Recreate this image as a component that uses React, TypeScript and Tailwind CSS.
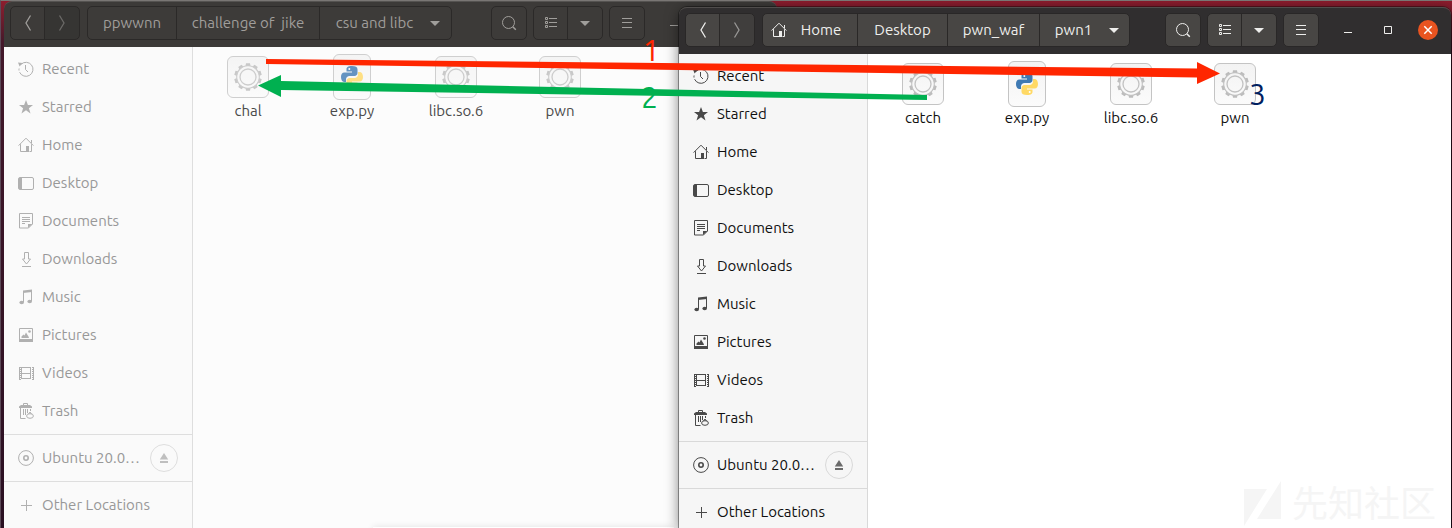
import React from "react";

type IconName =
  | "recent" | "starred" | "home" | "desktop" | "documents" | "downloads"
  | "music" | "pictures" | "videos" | "trash" | "disc" | "plus" | "eject"
  | "back" | "forward" | "search" | "list" | "down" | "menu"
  | "minimize" | "maximize" | "close";

const line = { fill: "none", stroke: "currentColor", strokeWidth: 1 } as const;

const shapes: Record<IconName, React.ReactNode> = {
  recent: (
    <>
      <path {...line} d="M3.2 3.2a7 7 0 1 1-1.6 8M1 9.5a7 7 0 0 1 .1-2" />
      <path d="M0 1.5 4.6 2 1.6 5.6z" />
      <path {...line} d="M7.5 4v4.5l2.5 2.5" />
    </>
  ),
  starred: <path d="m8 1 1.9 5h5.1l-4.100 3.200 1.600 5.300L8 11.300l-4.500 3.200 1.600-5.300L1 6h5.100z" />,
  home: (
    <>
      <path {...line} d="M.6 8.600 8 1.200l7.400 7.400M2.500 7.200v7.300h6V10M13.500 7.200v7.300h-2M13.500 3v3" />
      <path d="M8 9h3v6H8z" />
    </>
  ),
  desktop: (
    <>
      <rect {...line} x=".5" y="2.500" width="15" height="12" rx="1.500" />
      <path d="M1 3h3v11H1z" />
    </>
  ),
  documents: (
    <>
      <path {...line} d="M1.500.500h13v10.500l-4 4h-9z" />
      <path {...line} d="M4 4.500h8M4 6.500h8M4 8.500h8M4 10.500h3" />
      <path d="M10 15v-4h4.500z" />
    </>
  ),
  downloads: <path {...line} d="M6.500 1.500h4v6.500h2l-4 5-4-5h2zM4 15.500h9" />,
  music: (
    <>
      <path d="M5 1.500 14 .500v2.500L5 4z" />
      <path {...line} d="M5.500 2v11M13.500 1v11" />
      <ellipse cx="3.700" cy="13.500" rx="2.300" ry="1.800" />
      <ellipse cx="11.700" cy="12.500" rx="2.300" ry="1.800" />
    </>
  ),
  pictures: (
    <>
      <path {...line} d="M1.500 1.500h13v13h-13z" />
      <path d="M1 12h14v3H1zM3.500 11V9.500l2-2 1 1 1.500-3 1.500 2.500 1 1.500.500 1.500z" />
      <circle cx="11.500" cy="4.500" r="1.300" />
    </>
  ),
  videos: (
    <>
      <path {...line} d="M3.500 2v12M12.500 2v12M3 2.500h10M3 8.500h10M3 13.500h10" />
      <path {...line} strokeWidth={2} strokeDasharray="1 1" d="M2 2v13M15 2v13" />
      <path {...line} d="M1.500 2v13M15.500 2v13" />
    </>
  ),
  trash: (
    <>
      <path d="M1 5V3.500L3 2h9l2 1.500V5z" />
      <path {...line} d="M5.500 2V.500h4V2M2.500 5v10.500h5M5.500 6v6M7.500 6v6M9.500 6v4M12.500 6v2" />
      <ellipse {...line} cx="12" cy="13" rx="3.400" ry="2.300" />
      <path {...line} d="m10.500 11 1.500-2 1.500 2" />
    </>
  ),
  disc: (
    <>
      <circle {...line} cx="8" cy="8" r="7.400" />
      <circle {...line} strokeWidth={1.600} cx="8" cy="8" r="2.200" />
    </>
  ),
  plus: <path {...line} d="M8.500 3v11M3 8.500h11" />,
  eject: <path d="M8 3l4.200 6.500H3.800zM4 11h8v2H4z" />,
  back: <path {...line} strokeWidth={1.300} d="M10.500.500 6 8l4.500 7.500" />,
  forward: <path {...line} strokeWidth={1.300} d="M5.500.500 10 8l-4.500 7.500" />,
  search: (
    <>
      <circle {...line} cx="7.500" cy="7.500" r="6" />
      <path {...line} strokeWidth={1.500} d="m11.800 11.800 3 3" />
    </>
  ),
  list: (
    <>
      <path {...line} d="M2.500 2.500h2v2h-2zM2.500 6.500h2v2h-2zM2.500 10.500h2v2h-2z" />
      <path {...line} d="M6 3.500h8M6 7.500h8M6 11.500h8" />
    </>
  ),
  down: <path d="M3 6h10l-5 5z" />,
  menu: <path {...line} d="M3 3.500h10M3 7.500h10M3 12.500h10" />,
  minimize: <path {...line} d="M4 10.500h8" />,
  maximize: <path {...line} d="M4.500 4.500h7v7h-7z" />,
  close: <path {...line} strokeWidth={1.500} d="m4.300 4.300 7.400 7.400M11.700 4.300l-7.400 7.400" />,
};

function Icon({ name, className = "" }: { name: IconName; className?: string }) {
  return (
    <svg viewBox="0 0 16 16" fill="currentColor" aria-hidden="true" className={`size-4 shrink-0 ${className}`}>
      {shapes[name]}
    </svg>
  );
}

type Crumb = { label: string; width: string; icon?: IconName; menu?: boolean };
type FileItem = { name: string; kind: "binary" | "python" };

const places: { label: string; icon: IconName }[] = [
  { label: "Recent", icon: "recent" },
  { label: "Starred", icon: "starred" },
  { label: "Home", icon: "home" },
  { label: "Desktop", icon: "desktop" },
  { label: "Documents", icon: "documents" },
  { label: "Downloads", icon: "downloads" },
  { label: "Music", icon: "music" },
  { label: "Pictures", icon: "pictures" },
  { label: "Videos", icon: "videos" },
  { label: "Trash", icon: "trash" },
];

function ButtonGroup({ active, children }: { active: boolean; children: React.ReactNode }) {
  return (
    <div
      className={`flex h-[34px] shrink-0 divide-x overflow-hidden rounded-[5px] border ${
        active
          ? "divide-[#2a2827] border-[#292727] bg-[#484644] text-[#eeeeec]"
          : "divide-[#2b2928] border-[#2b2928] bg-[#3d3b39] text-[#a09e9b]"
      }`}
    >
      {children}
    </div>
  );
}

function ToolButton({ icon, label, dim = false }: { icon: IconName; label: string; dim?: boolean }) {
  return (
    <button type="button" aria-label={label} className={`flex w-[34px] items-center justify-center ${dim ? "bg-black/10" : ""}`}>
      <Icon name={icon} className={dim ? "opacity-50" : ""} />
    </button>
  );
}

function TitleBar({ active, crumbs }: { active: boolean; crumbs: Crumb[] }) {
  return (
    <header
      className={`flex shrink-0 items-center gap-[7px] rounded-t-lg border-t pr-[13px] pb-[3px] pl-1.5 ${
        active ? "h-[47px] border-[#504d4c] bg-[#302e2f] text-[#eeeeec]" : "h-[46px] border-[#555351] bg-[#3c3a38] text-[#a09e9b]"
      }`}
    >
      <ButtonGroup active={active}>
        <ToolButton icon="back" label="Back" />
        <ToolButton icon="forward" label="Forward" dim />
      </ButtonGroup>
      <ButtonGroup active={active}>
        {crumbs.map((c) => (
          <button
            key={c.label}
            type="button"
            className={`flex items-center justify-center whitespace-pre ${c.width} ${c.icon ? "pr-2" : ""} ${c.menu ? "pl-2" : ""}`}
          >
            {c.icon && <Icon name={c.icon} className="mr-3.5" />}
            {c.label}
            {c.menu && <Icon name="down" className="ml-3.5" />}
          </button>
        ))}
      </ButtonGroup>
      <div className="ml-auto flex items-center gap-1.5">
        <ButtonGroup active={active}>
          <ToolButton icon="search" label="Search" />
        </ButtonGroup>
        <ButtonGroup active={active}>
          <ToolButton icon="list" label="List view" />
          <ToolButton icon="down" label="View options" />
        </ButtonGroup>
        <ButtonGroup active={active}>
          <ToolButton icon="menu" label="Menu" />
        </ButtonGroup>
      </div>
      <div className="ml-3 flex items-center gap-5">
        <button type="button" aria-label="Minimize" className="flex size-5 items-center justify-center">
          <Icon name="minimize" />
        </button>
        <button type="button" aria-label="Maximize" className="flex size-5 items-center justify-center">
          <Icon name="maximize" />
        </button>
        <button type="button" aria-label="Close" className="flex size-5 items-center justify-center rounded-full bg-[#e95420] text-white">
          <Icon name="close" />
        </button>
      </div>
    </header>
  );
}

function Place({ icon, label }: { icon: IconName; label: string }) {
  return (
    <a href="#" className="flex h-[38px] items-center gap-2 pl-3.5">
      <Icon name={icon} className="opacity-75" />
      {label}
    </a>
  );
}

function Sidebar({ active }: { active: boolean }) {
  const rule = active ? "border-[#d9d9d9]" : "border-[#dedede]";
  return (
    <nav
      aria-label="Places"
      className={`w-[189px] shrink-0 border-r pt-[3px] ${rule} ${active ? "bg-[#f6f6f6] text-[#101010]" : "bg-[#fafafa] text-[#989898]"}`}
    >
      {places.map((p) => (
        <Place key={p.label} {...p} />
      ))}
      <div className={`mt-1 flex h-12 items-center justify-between border-y pr-3.5 ${rule}`}>
        <Place icon="disc" label="Ubuntu 20.0…" />
        <button type="button" aria-label="Eject" className={`flex size-7 shrink-0 items-center justify-center rounded-full border ${rule}`}>
          <Icon name="eject" className="opacity-60" />
        </button>
      </div>
      <div className="pt-1">
        <Place icon="plus" label="Other Locations" />
      </div>
    </nav>
  );
}

const teeth = [0, 36, 72, 108, 144, 180, 216, 252, 288, 324];

function Gear() {
  return (
    <svg viewBox="0 0 32 32" className="size-8" aria-hidden="true" fill="none" stroke="#c2c2c2">
      {teeth.map((a) => (
        <path key={a} d="M14 2.200h4l.5 2.800h-5z" fill="#bcbcbc" stroke="none" transform={`rotate(${a} 16 16)`} />
      ))}
      <circle cx="16" cy="16" r="11.300" strokeWidth="1.100" />
      <circle cx="16" cy="16" r="8" strokeWidth="1.300" />
    </svg>
  );
}

function Python() {
  return (
    <svg viewBox="0 0 24 24" className="size-6" aria-hidden="true">
      <path fill="#3f7ab3" d="M12 1C7.500 1 6.500 2.500 6.500 4.200v2.300H12v.9H4.500C2 7.400 1 9.500 1 12s1.200 5 3 5h2v-2.500c0-2 1.600-3.500 3.500-3.500h5c1.800 0 3-1.400 3-3V4.200C17.500 2 15.500 1 12 1z" />
      <path fill="#ffd965" d="M12 23c4.500 0 5.500-1.500 5.500-3.200v-2.300H12v-.9h7.500c2.500 0 3.500-2.100 3.500-4.600s-1.200-5-3-5h-2v2.500c0 2-1.600 3.500-3.500 3.500h-5c-1.800 0-3 1.400-3 3v3.800C6.500 22 8.500 23 12 23z" />
      <circle cx="9.300" cy="3.900" r="1" fill="#fff" />
      <circle cx="14.700" cy="20.100" r="1" fill="#fff" />
    </svg>
  );
}

function Files({ active, items }: { active: boolean; items: FileItem[] }) {
  return (
    <main className={`flex flex-1 content-start items-start pt-1.5 pl-[3px] ${active ? "bg-white text-[#101010]" : "bg-[#fcfcfc] text-[#4a4a4a]"}`}>
      {items.map((f) => (
        <button key={f.name} type="button" className="flex w-26 flex-col items-center">
          <span className="flex h-12 items-center">
            <span
              className={`flex items-center justify-center rounded-md border border-[#c4c4c4] bg-linear-to-b from-[#f3f3f3] to-[#fbfbfb] ${
                f.kind === "python" ? "h-[46px] w-[38px]" : "size-[42px]"
              } ${active ? "" : "opacity-80"}`}
            >
              {f.kind === "python" ? <Python /> : <Gear />}
            </span>
          </span>
          <span className="leading-5">{f.name}</span>
        </button>
      ))}
    </main>
  );
}

function FileWindow({ active, crumbs, items, className }: { active: boolean; crumbs: Crumb[]; items: FileItem[]; className: string }) {
  return (
    <section className={`absolute bottom-0 flex flex-col ${className}`}>
      <TitleBar active={active} crumbs={crumbs} />
      <div className="flex min-h-0 flex-1 overflow-hidden">
        <Sidebar active={active} />
        <Files active={active} items={items} />
      </div>
    </section>
  );
}

export default function App() {
  return (
    <div className="relative h-screen overflow-hidden border-t border-l border-t-[#797674] border-l-[#5c4a58] bg-linear-to-b from-[#8e1c2d] via-[#43182a] via-8% to-[#2a1022] font-['Ubuntu','Noto_Sans','Noto_Sans_CJK_SC',sans-serif] text-[15px] leading-5">
      <FileWindow
        active={false}
        className="top-0 left-[3px] w-[773px]"
        crumbs={[
          { label: "ppwwnn", width: "w-[89px]" },
          { label: "challenge of  jike", width: "w-[143px]" },
          { label: "csu and libc", width: "w-[131px]", menu: true },
        ]}
        items={[
          { name: "chal", kind: "binary" },
          { name: "exp.py", kind: "python" },
          { name: "libc.so.6", kind: "binary" },
          { name: "pwn", kind: "binary" },
        ]}
      />
      <div className="absolute -bottom-1 left-[372px] h-[5px] w-[301px] bg-white shadow-[0_0_6px_rgba(0,0,0,0.12)]" />
      <FileWindow
        active
        className="top-1.5 right-px left-[678px] rounded-t-lg shadow-[0_0_0_1px_rgba(0,0,0,0.35),0_3px_14px_rgba(0,0,0,0.5)]"
        crumbs={[
          { label: "Home", width: "w-[95px]", icon: "home" },
          { label: "Desktop", width: "w-[90px]" },
          { label: "pwn_waf", width: "w-[92px]" },
          { label: "pwn1", width: "w-[89px]", menu: true },
        ]}
        items={[
          { name: "catch", kind: "binary" },
          { name: "exp.py", kind: "python" },
          { name: "libc.so.6", kind: "binary" },
          { name: "pwn", kind: "binary" },
        ]}
      />

      <div className="absolute right-4 bottom-0 flex items-center gap-2.5 text-[36px] leading-[48px] text-[#f5f5f5]">
        <svg viewBox="0 0 38 46" className="h-[46px] w-[38px]" fill="currentColor" aria-hidden="true">
          <path d="M0 8h23L0 45zM37 0v38H13z" />
        </svg>
        先知社区
      </div>

      <svg className="pointer-events-none absolute -top-px -left-px h-[120px] w-[1300px]" viewBox="0 0 1300 120" aria-hidden="true">
        <path fill="#ff2600" d="M266 59 1197 68.500V62l23 11.500-23 10.500v-6.500L266 64z" />
        <path fill="#00b050" d="M927 95v5L281 90v7l-23-11.500L281 75v6z" />
      </svg>
      <span className="absolute top-[33px] left-[642px] font-['Open_Sans'] text-[30px] leading-8 text-[#ff2600]">1</span>
      <span className="absolute top-[80px] left-[640px] text-[30px] leading-8 text-[#00b050]">2</span>
      <span className="absolute top-[77px] left-[1248px] text-[30px] leading-8 text-[#002060]">3</span>
    </div>
  );
}
